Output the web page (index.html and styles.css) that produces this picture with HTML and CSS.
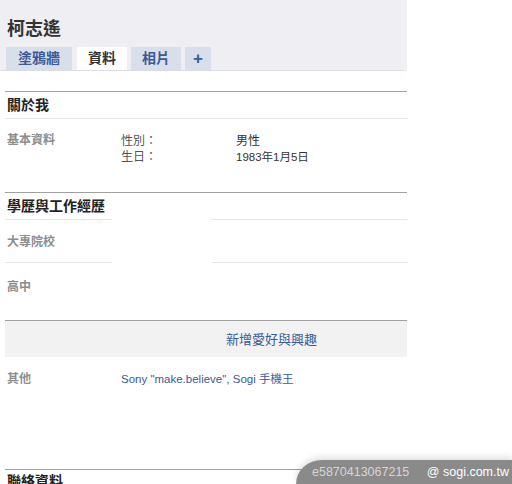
FILE: index.html
```html
<!DOCTYPE html>
<html lang="zh-Hant">
  <head>
    <meta charset="UTF-8" />
    <title>柯志遙 - 資料</title>
    <link rel="stylesheet" href="styles.css">
  </head>
  <body>
    <div class="profile-head">
      <h1>柯志遙</h1>
      <div class="tabs">
        <a class="tab">塗鴉牆</a>
        <a class="tab active">資料</a>
        <a class="tab">相片</a>
        <a class="tab plus">+</a>
      </div>
    </div>

    <div class="profile-body">
      <div class="section">
        <h2>關於我</h2>
        <div class="row basic">
          <div class="label">基本資料</div>
          <div class="pairs">
            <div class="key">性別：</div><div class="val">男性</div>
            <div class="key">生日：</div><div class="val num">1983年1月5日</div>
          </div>
        </div>
      </div>

      <div class="section edu">
        <h2>學歷與工作經歷</h2>
        <div class="row sub">
          <div class="label">大專院校</div>
        </div>
        <div class="row sub">
          <div class="label">高中</div>
        </div>
      </div>

      <div class="section interests">
        <div class="add-box"><a class="link">新增愛好與興趣</a></div>
        <div class="row other">
          <div class="label">其他</div>
          <a class="link small">Sony "make.believe", Sogi 手機王</a>
        </div>
      </div>

      <div class="section contact">
        <h2>聯絡資料</h2>
      </div>
    </div>

    <div class="watermark">
      <span class="code">e5870413067215</span>
      <span class="site">@ sogi.com.tw</span>
    </div>
  </body>
</html>
```

FILE: styles.css
```css
* {
  box-sizing: border-box;
  margin: 0;
  padding: 0;
}

body {
  font-family: "Liberation Sans", "Noto Sans CJK TC", sans-serif;
  color: #333;
  background: #fff;
  width: 512px;
  height: 484px;
  overflow: hidden;
  position: relative;
}

.profile-head {
  width: 407px;
  height: 71px;
  background: #eeeef3;
  border-right: 6px solid #f1f1f5;
  border-bottom: 1px solid #dcdce4;
  padding: 18px 0 0 6px;
}

.profile-head h1 {
  font-size: 18px;
  line-height: 22px;
  font-weight: bold;
  color: #333;
  padding-left: 1px;
  margin-bottom: 7px;
}

.tabs {
  display: flex;
  gap: 4px;
}

.tab {
  display: block;
  height: 23px;
  line-height: 23px;
  padding: 0 11px;
  font-size: 14px;
  font-weight: bold;
  color: #3b5998;
  background: #d8dfea;
}

.tab:first-child {
  padding: 0 12px;
  margin-right: 1px;
}

.tab.active {
  background: #fff;
  color: #333;
}

.tab.plus {
  width: 26px;
  padding: 0;
  text-align: center;
  font-size: 17px;
}

.profile-body {
  padding: 20px 0 0 5px;
  width: 407px;
}

.section {
  border-top: 1px solid #a0a0a0;
}

.section h2 {
  font-size: 14px;
  font-weight: bold;
  line-height: 26px;
  padding-left: 2px;
  color: #222;
  border-bottom: 1px solid #e6e6e6;
}

.row {
  display: flex;
  padding-left: 2px;
}

.label {
  width: 114px;
  font-size: 12px;
  font-weight: bold;
  color: #8d8d8d;
}

.basic {
  padding-top: 13px;
  height: 73px;
}

.basic .label {
  line-height: 17px;
}

.pairs {
  display: grid;
  grid-template-columns: 115px auto;
  grid-auto-rows: 16px;
  font-size: 12px;
  line-height: 16px;
  padding-top: 1px;
}

.key,
.val {
  height: 16px;
  overflow: visible;
}

.key {
  color: #555;
}

.val.num {
  font-size: 11.5px;
}

.edu h2 {
  border-bottom: none;
}

.edu .sub {
  height: 43px;
  align-items: center;
  background:
    linear-gradient(#e6e6e6, #e6e6e6) 0 0 / 107px 1px no-repeat,
    linear-gradient(#e6e6e6, #e6e6e6) 207px 0 / 195px 1px no-repeat;
}

.edu .sub:last-child {
  height: 58px;
  align-items: flex-start;
  padding-top: 15px;
}

.add-box {
  height: 36px;
  background: #f2f2f2;
  padding-left: 221px;
  line-height: 35px;
}

.link {
  color: #3b5998;
  font-size: 13px;
}

.other {
  padding-top: 14px;
  height: 112px;
  line-height: 17px;
}

.link.small {
  font-size: 11.5px;
}

.contact h2 {
  border-bottom: none;
  line-height: 22px;
}

.watermark {
  position: absolute;
  left: 296px;
  top: 460px;
  width: 216px;
  height: 24px;
  background: #8a8a8a;
  border-top-left-radius: 26px 24px;
  box-shadow: 0 -3px 6px rgba(0, 0, 0, 0.12);
  font-family: "Liberation Sans", sans-serif;
  font-size: 12.5px;
  line-height: 24px;
  padding-left: 16px;
  white-space: nowrap;
}

.watermark .code {
  color: #d6d6d6;
  margin-right: 14px;
}

.watermark .site {
  color: #fff;
}
```
